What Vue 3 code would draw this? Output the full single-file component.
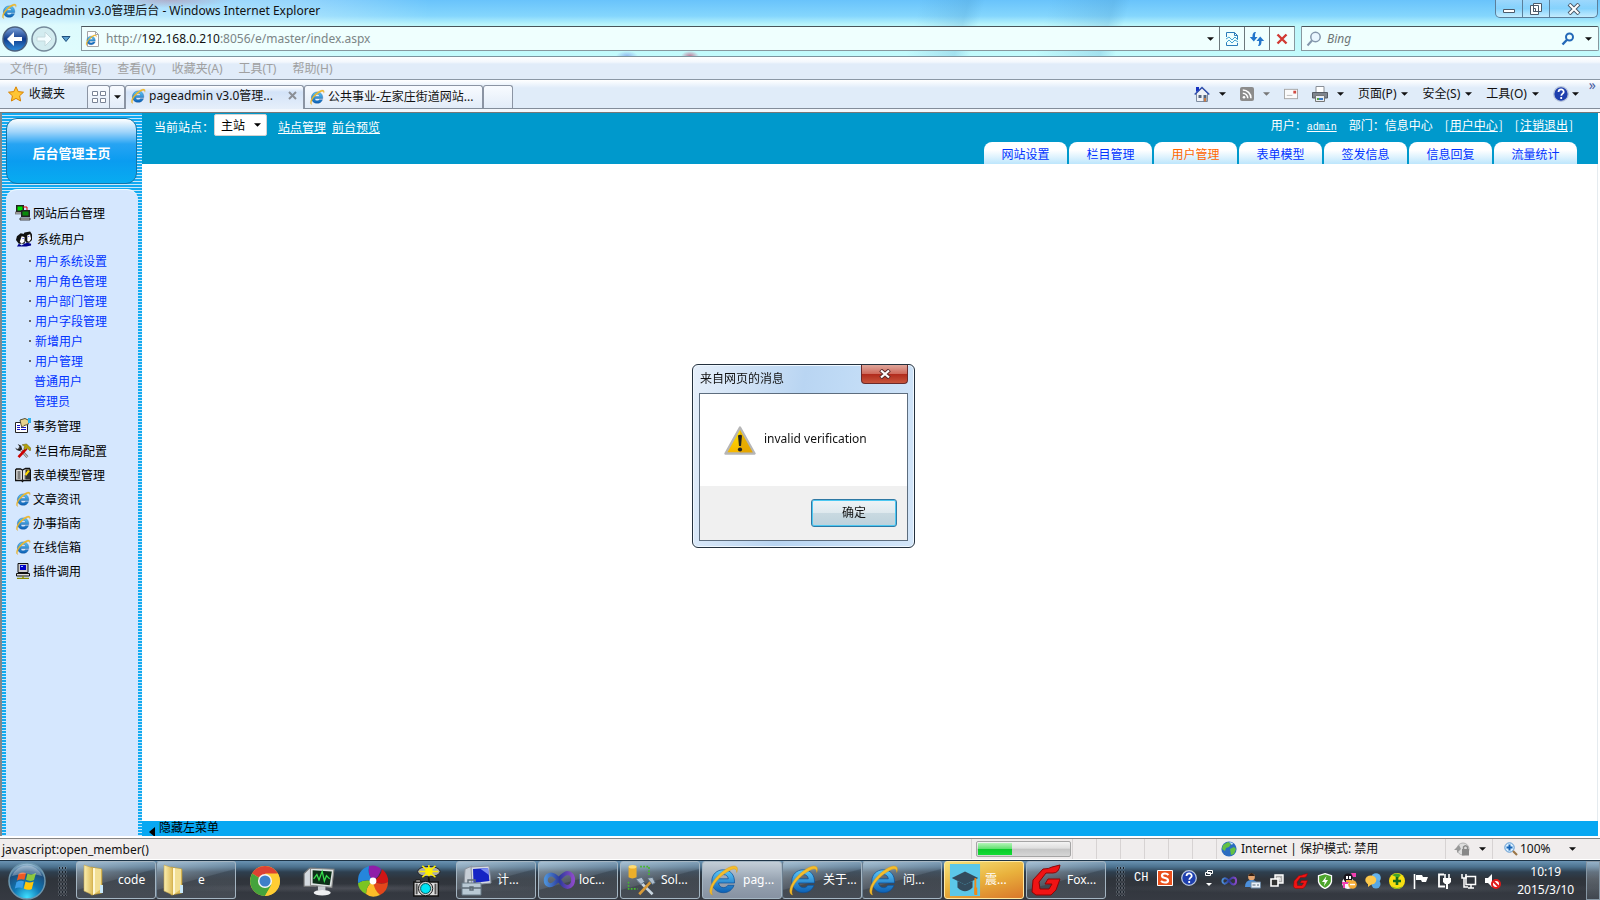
<script setup>
import { ref } from 'vue'

const site = ref('主站')
const keyword = ref('')
const address = ref('http://192.168.0.210:8056/e/master/index.aspx')
const showDialog = ref(true)

const menus = ['文件(F)', '编辑(E)', '查看(V)', '收藏夹(A)', '工具(T)', '帮助(H)']
const commands = ['页面(P)', '安全(S)', '工具(O)']

const navTabs = ['网站设置', '栏目管理', '用户管理', '表单模型', '签发信息', '信息回复', '流量统计']
const activeTab = ref('用户管理')

const sideTop = [
  { icon: 'servers', text: '网站后台管理' },
  { icon: 'users', text: '系统用户', wide: true },
]
const sideSub = ['用户系统设置', '用户角色管理', '用户部门管理', '用户字段管理', '新增用户', '用户管理']
const sidePlain = ['普通用户', '管理员']
const sideBottom = [
  { icon: 'form', text: '事务管理', tall: true },
  { icon: 'tools', text: '栏目布局配置', tall: true, wide: true },
  { icon: 'book', text: '表单模型管理' },
  { icon: 'ie', text: '文章资讯' },
  { icon: 'ie', text: '办事指南' },
  { icon: 'ie', text: '在线信箱' },
  { icon: 'computer', text: '插件调用' },
]

const launchers = ['chrome', 'monitor', 'pinwheel', 'camera']
const windows = [
  [{ icon: 'manage', text: '计...' }],
  [{ icon: 'vs', text: 'loc...' }],
  [{ icon: 'sol', text: 'Sol...' }],
  [
    { icon: 'ie', text: 'pag...', active: true },
    { icon: 'ie', text: '关于...' },
    { icon: 'ie', text: '问...' },
  ],
  [{ icon: 'cap', text: '震...', alert: true }],
  [{ icon: 'fox', text: 'Fox...' }],
]
const tray = ['vs', 'person', 'squares', 'fox', 'shield', 'penguin', 'chat', 'plus', 'flag', 'plug', 'net', 'mute']
</script>

<template>
  <div class="desktop">
    <svg class="sprite" aria-hidden="true">
      <defs>
        <linearGradient id="g-ie" x1="0" y1="0" x2="0" y2="1">
          <stop offset="0" stop-color="#5cc8f7" /><stop offset="1" stop-color="#0b5fb5" />
        </linearGradient>
        <linearGradient id="g-folder" x1="0" y1="0" x2="1" y2="0">
          <stop offset="0" stop-color="#f9eeb0" /><stop offset="1" stop-color="#dcb954" />
        </linearGradient>
        <linearGradient id="g-warn" x1="0" y1="0" x2="0" y2="1">
          <stop offset="0" stop-color="#ffe600" /><stop offset="1" stop-color="#f5b400" />
        </linearGradient>
        <linearGradient id="g-vs" x1="0" y1="0" x2="1" y2="0">
          <stop offset="0" stop-color="#4c8fd8" /><stop offset="0.5" stop-color="#2c3a9c" /><stop offset="1" stop-color="#8a4ac8" />
        </linearGradient>
        <radialGradient id="g-orb" cx="0.5" cy="0.95" r="0.95">
          <stop offset="0" stop-color="#3fe0ff" /><stop offset="0.4" stop-color="#0f77b4" /><stop offset="0.75" stop-color="#1c4d7c" /><stop offset="1" stop-color="#a9cbe0" />
        </radialGradient>
        <linearGradient id="g-back" x1="0" y1="0" x2="0" y2="1">
          <stop offset="0" stop-color="#7fa5dc" /><stop offset="0.5" stop-color="#123c8c" /><stop offset="1" stop-color="#2f8fe0" />
        </linearGradient>
      </defs>
      <symbol id="ie" viewBox="0 0 32 32">
        <path d="M27.5 19H11.6c.3 3 2.300 4.600 4.900 4.600 2 0 3.500-.8 4.400-2.300h6.100C25.300 25.900 21.500 28.700 16.300 28.700 9.700 28.700 4.800 24.100 4.800 17.300S9.800 5.800 16.300 5.800c7 0 11.600 4.800 11.200 13.200zM21.300 14.800c-.3-2.600-2.100-4.200-4.800-4.200s-4.500 1.600-4.900 4.200z" fill="url(#g-ie)" stroke="#0b4f96" stroke-width=".7" />
        <path d="M5.500 31C1.500 30 2 24 6.200 17.500 11.500 9.500 21 2.500 26.500 2c4-.2 4.800 2.600 3.200 6.500 0-3.500-2-4.200-5-3C18.500 8 10 15 6.500 21.800 4.500 26 4.500 29 5.500 31z" fill="#f4bd2b" stroke="#d0921a" stroke-width=".4" />
      </symbol>
      <symbol id="page" viewBox="0 0 16 16">
        <path d="M2.500.5h8l3 3v12h-11z" fill="#fff" stroke="#a5a5a5" /><path d="M10.500.5v3h3" fill="none" stroke="#a5a5a5" />
        <svg x="0" y="3" width="12" height="12" viewBox="0 0 32 32"><use href="#ie" /></svg>
      </symbol>
      <symbol id="star" viewBox="0 0 16 16">
        <path d="M8 .8l2.200 4.800 5.300.6-3.900 3.600 1 5.200L8 12.400 3.400 15l1-5.200L.5 6.200l5.300-.6z" fill="#ffc534" stroke="#d98200" />
      </symbol>
      <symbol id="quad" viewBox="0 0 16 16">
        <path d="M1.500 2.500h5v4h-5zM9.500 2.500h5v4h-5zM1.500 9.500h5v4h-5zM9.500 9.500h5v4h-5z" fill="#fff" stroke="#7a8496" />
      </symbol>
      <symbol id="lens" viewBox="0 0 16 16">
        <circle cx="9.500" cy="6" r="4.700" fill="#e9f7ff" stroke="#8497ac" stroke-width="1.500" /><path d="M6 9.500L1.500 14.500" stroke="#8497ac" stroke-width="2" />
      </symbol>
      <symbol id="lens-blue" viewBox="0 0 14 14">
        <circle cx="8.500" cy="5" r="3.500" fill="none" stroke="#2469b8" stroke-width="2" /><path d="M6 7.700L1.500 12.500" stroke="#2469b8" stroke-width="2.400" />
      </symbol>
      <symbol id="compat" viewBox="0 0 14 16">
        <path d="M1.500 6V1.500h8l3 3V8M9.500 1.500v3h3M1.500 12v2.500h11V12" fill="none" stroke="#2b7bb9" /><path d="M1 8l3-2 3 3 3-3 3 3M1 12l3-3 3 3 3-3 3 2" fill="none" stroke="#45a1d0" />
      </symbol>
      <symbol id="reload" viewBox="0 0 16 16">
        <path d="M7 1C4 1 3.500 3 3.500 6H.8L4.800 10.500 8.500 6H6C6 4 6 2.500 7 1zM9 15c3 0 3.500-2 3.500-5h2.700L11.200 5.500 7.500 10H10c0 2 0 3.500-1 5z" fill="#2476cb" />
      </symbol>
      <symbol id="stop" viewBox="0 0 12 12"><path d="M1.500 1.500l9 9M10.500 1.500l-9 9" stroke="#d13a34" stroke-width="2.400" /></symbol>
      <symbol id="down" viewBox="0 0 8 4"><path d="M0 0h8L4 4z" fill="currentColor" /></symbol>
      <symbol id="home" viewBox="0 0 16 16">
        <path d="M2.500 7v8.500h11V7L8 2z" fill="#eef1f6" stroke="#7e8ca0" /><path d="M.7 8.500L8 1.500l7.300 7" fill="none" stroke="#3452ae" stroke-width="1.600" /><path d="M2 1h3v3l-3 2z" fill="#1530c0" /><path d="M4.500 9h3v3h-3zM9.500 9h3v6.500h-3z" fill="#56667e" /><path d="M10 12h2v3.500h-2z" fill="#c97b45" />
      </symbol>
      <symbol id="rss" viewBox="0 0 14 14">
        <rect width="14" height="14" rx="2" fill="#8c8c8c" /><circle cx="4" cy="10.200" r="1.300" fill="#fff" /><path d="M2.800 6.200a5 5 0 015 5M2.800 3a8.200 8.200 0 018.200 8.200" fill="none" stroke="#fff" stroke-width="1.500" />
      </symbol>
      <symbol id="mail" viewBox="0 0 15 11">
        <rect x=".5" y=".5" width="14" height="10" fill="#fbfbfb" stroke="#a5a5a5" /><path d="M10 2h3v3h-3z" fill="#d04b42" /><path d="M3 7h6" stroke="#bbb" />
      </symbol>
      <symbol id="printer" viewBox="0 0 16 16">
        <path d="M4 .5h8v6H4z" fill="#fff" stroke="#8a8f97" /><path d="M.5 6.500h15V12H.5z" fill="#7f858e" stroke="#565b63" /><path d="M3.500 9.500h9v6h-9z" fill="#e9edf3" stroke="#777" /><path d="M5 12h2v2H5z" fill="#54a23d" /><path d="M7 12h4v2H7z" fill="#3b79c6" />
      </symbol>
      <symbol id="help" viewBox="0 0 16 16">
        <circle cx="8" cy="8" r="7.300" fill="#1e3fae" stroke="#b9c6dc" stroke-width="1.300" /><path d="M5.500 6c.2-3.600 5.400-3.200 5.200 0-.1 1.600-2.400 1.800-2.400 3.800M8.200 11v2" fill="none" stroke="#fff" stroke-width="1.800" />
      </symbol>
      <symbol id="servers" viewBox="0 0 16 16">
        <path d="M1 0h8v7H1z" fill="#222" /><path d="M2.500 1.500h5v4h-5z" fill="#00e000" /><path d="M0 7h8v2H0z" fill="#bbb" stroke="#333" stroke-width=".5" /><path d="M8 2h4v3" fill="none" stroke="#d00" /><path d="M6 5h9v7H6z" fill="#222" /><path d="M7.500 6.500h6v4h-6z" fill="#0a8a0a" /><path d="M5 13h10v2H5z" fill="#ccc" stroke="#222" stroke-width=".8" />
      </symbol>
      <symbol id="users" viewBox="0 0 17 16">
        <path d="M9 1l6-1 2 3v6l-3 3h-3L7 5z" fill="#111" /><path d="M12 4l3-1 1 5-2 3-2-1z" fill="#fff" /><path d="M1 5l4-3 5 1 1 4-2 6H3L0 9z" fill="#111" /><path d="M6 5l3 1v5l-3 2-2-2z" fill="#fff" /><path d="M7 7h1v1H7zM13 5h1v1h-1z" fill="#00d" /><path d="M1 16l2-3 3 2 3-2 3-1 4 1v2l-5 1z" fill="#00008b" />
      </symbol>
      <symbol id="form" viewBox="0 0 16 16">
        <path d="M.5 4.500h12v10H.5z" fill="#fff" stroke="#222" /><path d="M2 7.500h3M2 9.500h3M2 11.500h3M6 9.500h5M6 11.500h5" stroke="#11c" /><path d="M5 2l5-1.500 4 2-1 4-4 1-2 2-1-3z" fill="#e6d28c" stroke="#443c22" stroke-width=".9" /><path d="M13 0h3v5h-3z" fill="#29b4f0" />
      </symbol>
      <symbol id="tools" viewBox="0 0 18 16">
        <path d="M4 4l10 11" stroke="#777" stroke-width="3" /><path d="M4 4l10 11" stroke="#eee" /><path d="M0 4l3 2 2-1V3L3 0l4 2 1 4-3 2-3-1z" fill="#222" /><path d="M13 5L4 15" stroke="#c00" stroke-width="3" /><path d="M8 1l5-1 5 5-1 3-3-3-3 2-1-2 1-2z" fill="#b4a20c" stroke="#554d00" stroke-width=".5" />
      </symbol>
      <symbol id="book" viewBox="0 0 16 14">
        <path d="M.5 2l1-1h4l2 1 3-1.500h4l1 2v10h-7l-1 1-1-1h-6z" fill="#ddd" stroke="#111" stroke-width="1.300" /><path d="M7.500 2v11M2.500 4h3M2.500 6h3M2.500 8h3M2.500 10h3M9.500 8h3M9.500 10h3" stroke="#222" /><path d="M10.500 1.500h4.500v10h-4.500z" fill="#333" /><path d="M13 2l2 1-4 5-1-2z" fill="#ffd800" />
      </symbol>
      <symbol id="computer" viewBox="0 0 14 16">
        <path d="M2 .5h10v9H2z" fill="#ccc" stroke="#111" /><path d="M4 2h6v5H4z" fill="#0000c8" /><path d="M5 3h2v1H5z" fill="#9cf" /><path d="M.5 10.500h13v2.500H.5z" fill="#ddd" stroke="#111" /><path d="M7 13v2M1 15.500h12" stroke="#8b8b00" stroke-width="1.400" />
      </symbol>
      <symbol id="warn" viewBox="0 0 32 30">
        <path d="M16 1.500L30.500 27.500H1.500z" fill="url(#g-warn)" stroke="#b6b6b6" stroke-width="2.400" stroke-linejoin="round" /><path d="M16 4v22.500h13z" fill="#d99800" opacity=".55" /><path d="M14 9.500q2-1.500 4 0l-1 10.500h-2z" fill="#222" /><circle cx="16" cy="23.500" r="2.100" fill="#222" />
      </symbol>
      <symbol id="globe" viewBox="0 0 16 16">
        <circle cx="8" cy="8" r="7.600" fill="#2c6cc0" /><path d="M2 4l5-3 3 2-2 3-3 1-1 3-3-2zM9 8l4-2 2 2-2 5-3 1z" fill="#64c043" /><path d="M8 1l4 1-1 2z" fill="#cfe8ff" />
      </symbol>
      <symbol id="lock" viewBox="0 0 16 14">
        <circle cx="9" cy="7" r="6" fill="#ddd" stroke="#b3b3b3" /><path d="M5 3L0 8l3 0v3l4-4z" fill="#999" /><path d="M8 7h7v6.500H8z" fill="#888" /><path d="M9.500 7V5q2-2.500 4 0v2" fill="none" stroke="#888" stroke-width="1.400" />
      </symbol>
      <symbol id="zoom" viewBox="0 0 14 14">
        <circle cx="5.500" cy="5.500" r="4.700" fill="#d9efff" stroke="#5894cf" /><path d="M5.500 2.500v6M2.500 5.500h6" stroke="#1764b6" stroke-width="2" /><path d="M9 9l4 4" stroke="#9b7546" stroke-width="2.200" />
      </symbol>
      <symbol id="orb" viewBox="0 0 38 38">
        <circle cx="19" cy="19" r="18" fill="url(#g-orb)" stroke="#6c96ae" stroke-width="1.500" />
        <path d="M10.500 12q4-2.500 7.500-.8l-1.600 6.600q-3.400-1.500-7.500.6z" fill="#ee5a24" /><path d="M19.500 11.500q4 2 8.500-.5L26 18q-4 2-8-.2z" fill="#8cc63f" /><path d="M8.500 20q4-2 7.500-.6L14.400 26q-3.600-1.500-7.600.6z" fill="#3a9ee8" /><path d="M17.500 19.600q4 2 8.200 0L23.800 27q-4 2-8-.6z" fill="#ffc60a" />
        <path d="M4 14a16 16 0 0130 0q-15-5-30 0z" fill="#fff" opacity=".3" />
      </symbol>
      <symbol id="folder" viewBox="0 0 24 32">
        <path d="M9 3l11 2v24l-11 2z" fill="#dfbd5c" stroke="#b99735" stroke-width=".6" /><path d="M2 1l9 3v27l-9-4z" fill="url(#g-folder)" stroke="#c6a44a" stroke-width=".6" /><path d="M11 4l8 1v20l-8 6z" fill="#f2df95" /><path d="M11 4l2 .3v25L11 31z" fill="#fff8d5" /><path d="M18 21h3v8h-3z" fill="#c9e8f8" />
      </symbol>
      <symbol id="chrome" viewBox="-1 -1 30 30">
        <circle cx="14" cy="14" r="14" fill="#ffcd33" /><path d="M14 14L1.900 7A14 14 0 0126.100 7z" fill="#dd4132" /><path d="M1.900 7A14 14 0 0014 28l6-10.500-6-3.500z" fill="#45a33c" /><path d="M14 7h12.100A14 14 0 0114 28l6.500-11z" fill="#ffcd33" /><circle cx="14" cy="14" r="6.600" fill="#f5f5f5" /><circle cx="14" cy="14" r="5.200" fill="#3f7fc8" />
      </symbol>
      <symbol id="monitor" viewBox="0 0 30 28">
        <path d="M1 7l5-5h6v17H1z" fill="#d5dae0" stroke="#777" /><path d="M7 2l22 1-2 17-20-2z" fill="#dde2e2" stroke="#888" /><path d="M9 4l18 1-2 13-16-2z" fill="#0c2e17" /><path d="M10 12l3-4 2 5 3-8 2 9 2-5 3 3" fill="none" stroke="#38e04e" stroke-width="1.200" /><path d="M14 19h7v4h-7z" fill="#c9cdd2" /><ellipse cx="18" cy="25" rx="8" ry="2.600" fill="#eef0f2" />
      </symbol>
      <symbol id="pinwheel" viewBox="0 0 32 32">
        <path d="M16 16Q10 9 12 1q7-2 12 3-1 7-8 12z" fill="#8f1ea8" /><path d="M16 16Q24 12 25 4q7 6 6 13-6 4-15-1z" fill="#cf1515" /><path d="M16 16q8 5 15 1 0 9-8 13-6-4-7-14z" fill="#e3471b" /><path d="M16 16q1 9 7 14-8 4-14-1 0-8 7-13z" fill="#fdbd28" /><path d="M16 16q-7 5-7 13-8-4-8-11 6-4 15-2z" fill="#7bc522" /><path d="M16 16Q7 14 1 18 0 5 12 1q-2 8 4 15z" fill="#2586dc" /><circle cx="16" cy="16" r="3.400" fill="#fff" />
      </symbol>
      <symbol id="camera" viewBox="0 0 32 34">
        <ellipse cx="18" cy="7" rx="12" ry="5.500" fill="#aaa" stroke="#222" /><path d="M18 0v14M8 7h20M11 1l14 12M25 1L11 13" stroke="#ffee00" stroke-width="1.600" /><circle cx="18" cy="7" r="4" fill="#ffee00" /><path d="M18 12v7" stroke="#111" stroke-width="2" /><path d="M2 18h26v15H2z" fill="#ddd" stroke="#111" stroke-width="1.600" /><path d="M4 16h5v2H4z" fill="#fff" stroke="#111" /><path d="M5 20v11M25 20v11" stroke="#555" stroke-width="2" /><circle cx="14.500" cy="25" r="7.600" fill="#ccc" stroke="#111" /><circle cx="14.500" cy="25" r="5.300" fill="#00e4f4" stroke="#055" />
      </symbol>
      <symbol id="manage" viewBox="0 0 32 32">
        <path d="M4 5l7-3v20H3z" fill="#c7ced6" stroke="#8a929c" /><path d="M10 3l18-1 2 17-19 2z" fill="#d5dae2" stroke="#8791a0" /><path d="M12 5l15-1 1.500 13-16 2z" fill="#1524c4" /><path d="M19 4.500l8-.5 1 7z" fill="#7b8cf0" /><path d="M1 19h19v12H1z" fill="#b9c9d4" stroke="#6b7c88" /><path d="M7 19v-3h7v3M1 24h19M9 23h3v3H9z" fill="none" stroke="#5d6b75" stroke-width="1.400" />
      </symbol>
      <symbol id="vs" viewBox="0 0 32 32">
        <path d="M16 16C12 11 9 10 6.500 10.800 1.500 12.500 1.500 20 6.500 21.300 12 22.500 18 9.500 24.500 9c7.500 0 7.500 13.500 0 14-4 0-6-4-8.500-7z" fill="none" stroke="url(#g-vs)" stroke-width="4" />
      </symbol>
      <symbol id="sol" viewBox="0 0 32 36">
        <path d="M2 3v12q4 2.500 9 0V3z" fill="#edaf2a" /><ellipse cx="6.500" cy="3" rx="4.500" ry="2" fill="#ffdb72" /><path d="M15 3h10v11M2 20v8h10" fill="none" stroke="#45b92e" stroke-width="1.800" stroke-dasharray="2 1.500" /><path d="M13 18l16 16" stroke="#c9d5df" stroke-width="3" /><path d="M28 19L14 34" stroke="#d79a39" stroke-width="3" /><path d="M10 17l7-2 3 5-4 3zM23 16l6-1 3 6-3 2z" fill="#aebdcc" stroke="#53677a" />
      </symbol>
      <symbol id="cap" viewBox="0 0 32 34">
        <path d="M0 0h32v34H0z" fill="#5cc8e8" /><path d="M16 8l14 7-14 7-14-7z" fill="#334b5c" /><path d="M8 18v7q8 8 16 0v-7l-8 4z" fill="#334b5c" /><path d="M27 15v17" stroke="#f08a16" stroke-width="2" /><path d="M26 25h3v8h-3z" fill="#f08a16" />
      </symbol>
      <symbol id="fox" viewBox="0 0 32 32">
        <path d="M29 1q-1 8-7 8H15l-7 9 1 7h9l3-5h-7l3-5h12l-4 11-5 5H5l-4-3 1-12L12 5q6 0 9-2z" fill="#f01414" stroke="#8d0505" />
      </symbol>
      <symbol id="person" viewBox="0 0 16 16">
        <circle cx="6.500" cy="4" r="3.400" fill="#e5a46f" /><path d="M3 3q3.500-6 7 0z" fill="#342014" /><path d="M0 14q0-7 6.500-7t6 7z" fill="#4b8fdc" /><path d="M6 9h9.500v6H6z" fill="#e9f0f7" stroke="#6d87a1" /><path d="M7.500 12h3M12 12h2" stroke="#567" />
      </symbol>
      <symbol id="squares" viewBox="0 0 16 16">
        <path d="M6 2h8v8H6z" fill="#aaa" stroke="#fff" stroke-width="1.400" /><path d="M2 6h7v7H2z" fill="#333" stroke="#fff" stroke-width="1.600" /><path d="M8 5h3v3" fill="none" stroke="#fff" />
      </symbol>
      <symbol id="shield" viewBox="0 0 16 16">
        <path d="M8 .7l6.500 2v5.800Q13.500 13 8 15.500 2.500 13 1.500 8.500V2.700z" fill="#4da52c" stroke="#fff" stroke-width="1.300" /><path d="M9.500 3L5 9h2.700L7 13l4-6H8.300z" fill="#fff" />
      </symbol>
      <symbol id="penguin" viewBox="0 0 16 16">
        <ellipse cx="7" cy="10" rx="6" ry="6" fill="#f8f8f8" /><circle cx="7" cy="5" r="4.500" fill="#17141c" /><path d="M5 3h2v3H5zM8 3h2v3H8z" fill="#fff" /><path d="M5 7h5v2H5z" fill="#f5ac37" /><path d="M10 0h5v4h-3zM1 9h6v2H1zM2 11h2v4H2z" fill="#f040b0" /><circle cx="11.500" cy="11.500" r="4.300" fill="#f5ac37" /><path d="M9 11.500h5" stroke="#fff" stroke-width="1.400" />
      </symbol>
      <symbol id="chat" viewBox="0 0 16 16">
        <circle cx="11" cy="5" r="4.800" fill="#65b4ec" /><circle cx="11" cy="11" r="4.500" fill="#58a7e4" /><ellipse cx="5.800" cy="7" rx="5.500" ry="4.500" fill="#fdc84b" /><path d="M3 10v4l4-3z" fill="#fdc84b" />
      </symbol>
      <symbol id="plus" viewBox="0 0 16 16">
        <circle cx="8" cy="8" r="8" fill="#f8df12" /><path d="M2 13A8 8 0 0014 13Q8 17 2 13zM3 2q5-3 9 0L9 5z" fill="#43a52a" /><path d="M8 4v8M4 8h8" stroke="#186b1c" stroke-width="2.600" />
      </symbol>
      <symbol id="flag" viewBox="0 0 16 16"><path d="M1.500 1v15" stroke="#fff" stroke-width="1.600" /><path d="M3 2h6l1 2h5l-2 5H9L8 7H3z" fill="#fff" /></symbol>
      <symbol id="plug" viewBox="0 0 16 16">
        <path d="M7 1.500H2v12h6" fill="none" stroke="#fff" stroke-width="1.800" /><path d="M8 1v4M12 1v4" stroke="#fff" stroke-width="1.600" /><path d="M6 5h8v4l-2 2H8L6 9zM9 10h2v6H9z" fill="#fff" />
      </symbol>
      <symbol id="net" viewBox="0 0 16 16">
        <path d="M5 3.500h9.500v8H5z" fill="none" stroke="#fff" stroke-width="1.500" /><path d="M1 1v4h4V1M3 5v9h4M7 15h6M10 12v3" fill="none" stroke="#fff" stroke-width="1.500" />
      </symbol>
      <symbol id="mute" viewBox="0 0 16 16">
        <path d="M0 5h3l4-4v13l-4-4H0z" fill="#fff" /><circle cx="11" cy="11" r="4" fill="#fff" stroke="#e01a1a" stroke-width="2" /><path d="M8.500 8.500l5 5" stroke="#e01a1a" stroke-width="2" />
      </symbol>
    </svg>

    <header class="glass">
      <div class="title-bar">
        <svg class="i16"><use href="#ie" /></svg>
        <h1>pageadmin v3.0管理后台 - Windows Internet Explorer</h1>
        <div class="win-buttons">
          <button aria-label="最小化"><svg viewBox="0 0 14 12"><path d="M1.500 6.500h11v3h-11z" fill="#fff" stroke="#4c5a6a" /></svg></button>
          <button aria-label="还原"><svg viewBox="0 0 14 12"><path d="M4.500.5h8v8h-8zM1.500 2.500h8v9h-8z" fill="#fff" stroke="#4c5a6a" /><path d="M4.500 5.500h2v3h-2z" fill="none" stroke="#4c5a6a" /></svg></button>
          <button class="wide" aria-label="关闭"><svg viewBox="0 0 14 12"><path d="M2 1l10 10M12 1L2 11" stroke="#4c5a6a" stroke-width="4" /><path d="M2.500 1.500l9 9M11.500 1.500l-9 9" stroke="#fff" stroke-width="2" /></svg></button>
        </div>
      </div>
      <div class="address-row">
        <button class="round" aria-label="后退">
          <svg viewBox="0 0 26 26"><circle cx="13" cy="13" r="12" fill="url(#g-back)" stroke="#4a5f7e" stroke-width="1.500" /><path d="M12 6l-7 7 7 7v-5h8v-4h-8z" fill="#fff" /></svg>
        </button>
        <button class="round" aria-label="前进">
          <svg viewBox="0 0 26 26"><circle cx="13" cy="13" r="12" fill="#d3ecf0" stroke="#75899a" stroke-width="1.500" /><path d="M14 6l7 7-7 7v-5H6v-4h8z" fill="#f3fdff" stroke="#c5dade" /></svg>
        </button>
        <button class="history" aria-label="最近浏览"><svg viewBox="0 0 10 6"><path d="M1 .5h8L5 5.500z" fill="#5aa0d0" stroke="#1f4f7f" /></svg></button>
        <div class="address">
          <svg class="i16"><use href="#page" /></svg>
          <label class="url">
            <span aria-hidden="true"><i>http://</i>192.168.0.210<i>:8056/e/master/index.aspx</i></span>
            <input v-model="address" aria-label="地址">
          </label>
          <button class="plain" aria-label="地址列表"><svg class="arrow"><use href="#down" /></svg></button>
          <button aria-label="兼容性视图"><svg class="i16"><use href="#compat" /></svg></button>
          <button aria-label="刷新"><svg class="i16"><use href="#reload" /></svg></button>
          <button aria-label="停止"><svg class="i12"><use href="#stop" /></svg></button>
        </div>
        <div class="search">
          <svg class="i16"><use href="#lens" /></svg>
          <input v-model="keyword" placeholder="Bing" aria-label="搜索">
          <button aria-label="搜索"><svg class="i14"><use href="#lens-blue" /></svg></button>
          <button aria-label="搜索选项"><svg class="arrow"><use href="#down" /></svg></button>
        </div>
      </div>
    </header>

    <nav class="menu-bar">
      <button v-for="m in menus" :key="m">{{ m }}</button>
    </nav>

    <div class="tab-bar">
      <button class="favorites"><svg class="i16"><use href="#star" /></svg>收藏夹</button>
      <button class="quick" aria-label="快速导航选项卡"><svg class="i16"><use href="#quad" /></svg></button>
      <button class="quick narrow" aria-label="选项卡列表"><svg class="arrow"><use href="#down" /></svg></button>
      <button class="tab current">
        <svg class="i16"><use href="#ie" /></svg><span>pageadmin v3.0管理...</span>
        <svg class="close" viewBox="0 0 9 9"><path d="M1 1l7 7M8 1L1 8" stroke="#8b8f96" stroke-width="2" /></svg>
      </button>
      <button class="tab"><svg class="i16"><use href="#ie" /></svg><span>公共事业-左家庄街道网站...</span></button>
      <button class="tab blank" aria-label="新选项卡"></button>
      <div class="commands">
        <button aria-label="主页"><svg class="i16"><use href="#home" /></svg><svg class="arrow"><use href="#down" /></svg></button>
        <button class="dim" aria-label="源"><svg class="i14"><use href="#rss" /></svg><svg class="arrow"><use href="#down" /></svg></button>
        <button aria-label="阅读邮件"><svg class="i14"><use href="#mail" /></svg></button>
        <button aria-label="打印"><svg class="i16"><use href="#printer" /></svg><svg class="arrow"><use href="#down" /></svg></button>
        <button v-for="c in commands" :key="c" class="word">{{ c }}<svg class="arrow"><use href="#down" /></svg></button>
        <button class="help" aria-label="帮助"><svg class="i16"><use href="#help" /></svg><svg class="arrow"><use href="#down" /></svg></button>
        <span class="more">»</span>
      </div>
    </div>

    <div class="page">
      <aside>
        <a href="#" class="home-link">后台管理主页</a>
        <div class="panel">
          <ul>
            <li v-for="s in sideTop" :key="s.text" class="top">
              <a href="#" :class="{ wide: s.wide }"><svg class="i16"><use :href="'#' + s.icon" /></svg>{{ s.text }}</a>
            </li>
            <li v-for="s in sideSub" :key="s" class="sub dot"><a href="#">{{ s }}</a></li>
            <li v-for="s in sidePlain" :key="s" class="sub"><a href="#">{{ s }}</a></li>
            <li v-for="s in sideBottom" :key="s.text" class="item">
              <a href="#" :class="{ tall: s.tall, wide: s.wide }"><svg class="i16"><use :href="'#' + s.icon" /></svg>{{ s.text }}</a>
            </li>
          </ul>
        </div>
      </aside>

      <section class="content">
        <div class="site-head">
          <div class="site">
            <label for="site">当前站点：</label>
            <div class="select">
              <select id="site" v-model="site"><option>主站</option></select>
              <svg class="arrow"><use href="#down" /></svg>
            </div>
            <a href="#">站点管理</a>
            <a href="#">前台预览</a>
          </div>
          <div class="account">
            <div class="who">
              <span>用户：<a href="#" class="mono">admin</a></span>
              <span>部门：信息中心</span>
              <span class="bracket">[<a href="#">用户中心</a>]</span>
              <span class="bracket">[<a href="#">注销退出</a>]</span>
            </div>
            <nav>
              <button v-for="t in navTabs" :key="t" :class="{ on: t === activeTab }" @click="activeTab = t">{{ t }}</button>
            </nav>
          </div>
        </div>
        <main></main>
        <button class="hide-menu"><svg viewBox="0 0 6 10"><path d="M6 0v10L0 5z" /></svg><span>隐藏左菜单</span></button>
      </section>
    </div>

    <footer class="status">
      <span class="message">javascript:open_member()</span>
      <div class="cell progress"><div class="track"><div class="bar"></div></div></div>
      <div v-for="n in 6" :key="n" class="cell"></div>
      <div class="cell zone"><svg class="i16"><use href="#globe" /></svg>Internet | 保护模式: 禁用</div>
      <div class="cell lock"><svg class="i16"><use href="#lock" /></svg><svg class="arrow"><use href="#down" /></svg></div>
      <div class="cell zoom"><svg class="i14"><use href="#zoom" /></svg><span>100%</span><svg class="arrow"><use href="#down" /></svg></div>
    </footer>

    <div class="taskbar">
      <button class="start" aria-label="开始"><svg><use href="#orb" /></svg></button>
      <div class="grip"></div>
      <div class="group folders">
        <button class="task"><svg class="i32"><use href="#folder" /></svg><span>code</span></button>
        <button class="task"><svg class="i32"><use href="#folder" /></svg><span>e</span></button>
      </div>
      <div class="launchers">
        <button v-for="l in launchers" :key="l" :aria-label="l"><svg class="i32"><use :href="'#' + l" /></svg></button>
      </div>
      <div v-for="(g, i) in windows" :key="i" class="group">
        <button v-for="t in g" :key="t.text" class="task" :class="{ active: t.active, alert: t.alert }">
          <svg class="i32"><use :href="'#' + t.icon" /></svg><span>{{ t.text }}</span>
        </button>
      </div>
      <div class="grip right"></div>
      <div class="lang">
        <span>CH</span>
        <svg class="i16" viewBox="0 0 16 16"><path d="M.5.500h15v15H.5z" fill="#e9501c" stroke="#fff" /><path d="M11.500 5Q10 3.500 8 3.500c-4 0-4 4 0 4.500s4 4.500 0 4.500q-2.500 0-4-1.500" fill="none" stroke="#fff" stroke-width="2.200" /></svg>
        <svg class="i16"><use href="#help" /></svg>
        <svg class="restore" viewBox="0 0 8 16"><path d="M2.500.5h5v3h-5zM.5 2.500h5v3h-5z" fill="#26303a" stroke="#fff" /><path d="M1 13h6l-3 3z" fill="#fff" /></svg>
      </div>
      <div class="tray">
        <svg v-for="(t, i) in tray" :key="i" class="i16"><use :href="'#' + t" /></svg>
      </div>
      <div class="clock"><span>10:19</span><span>2015/3/10</span></div>
      <button class="show-desktop" aria-label="显示桌面"></button>
    </div>

    <div v-if="showDialog" class="overlay">
      <div class="dialog" role="alertdialog" aria-labelledby="dialog-title">
        <div class="dialog-title">
          <span id="dialog-title">来自网页的消息</span>
          <button aria-label="关闭" @click="showDialog = false">
            <svg viewBox="0 0 12 10"><path d="M1.500 1l9 8M10.500 1l-9 8" stroke="#5a2b2b" stroke-width="4" /><path d="M2 1.500l8 7M10 1.500l-8 7" stroke="#fff" stroke-width="2.200" /></svg>
          </button>
        </div>
        <div class="dialog-body">
          <div class="dialog-text"><svg><use href="#warn" /></svg><span>invalid verification</span></div>
          <div class="dialog-foot"><button @click="showDialog = false">确定</button></div>
        </div>
      </div>
    </div>
  </div>
</template>

<style>
body {
  margin: 0;
  background: #fff;
}
</style>

<style scoped>
* {
  box-sizing: border-box;
}
.desktop {
  display: flex;
  flex-direction: column;
  min-height: 100vh;
  font: 12px/16px "Noto Sans", "Noto Sans CJK SC", sans-serif;
  color: #111;
}
.sprite {
  position: absolute;
  width: 0;
  height: 0;
}
button, input, select {
  font: inherit;
  color: inherit;
  border: 0;
  padding: 0;
  margin: 0;
  background: none;
}
button {
  display: flex;
  align-items: center;
  white-space: nowrap;
}
svg {
  flex: none;
  display: block;
}
.i12 { width: 12px; height: 12px; }
.i14 { width: 14px; height: 14px; }
.i16 { width: 16px; height: 16px; }
.i32 { width: 32px; height: 32px; }
.arrow { width: 7px; height: 4px; }

/* browser chrome */
.glass {
  height: 57px;
  background:
    radial-gradient(ellipse 9px 5px at 690px 56px, rgba(190, 70, 110, .7), transparent),
    radial-gradient(ellipse 11px 5px at 627px 56px, rgba(110, 140, 230, .6), transparent),
    radial-gradient(ellipse 60px 8px at 170px 0, rgba(190, 90, 110, .35), transparent),
    linear-gradient(90deg, rgba(255, 255, 255, .55), rgba(255, 255, 255, .3) 18%, transparent 27%),
    linear-gradient(105deg, transparent 57%, rgba(70, 150, 200, .25) 60%, transparent 61%, transparent 65%, rgba(70, 150, 200, .25) 69%, transparent 70%),
    linear-gradient(#69c3fb, #84d6fd 16px, #bcf6fb 25px, #c3fbfc);
  border-bottom: 1px solid #7d949f;
}
.title-bar {
  display: flex;
  align-items: center;
  height: 26px;
  padding-left: 1px;
  gap: 4px;
}
.title-bar .i16 {
  margin-bottom: 4px;
}
h1 {
  flex: 1;
  margin: 0 0 5px;
  font: inherit;
}
.win-buttons {
  display: flex;
  align-self: flex-start;
  height: 18px;
  margin-right: 2px;
  border: 1px solid #5b7f9b;
  border-top: 0;
  border-radius: 0 0 5px 5px;
  background: linear-gradient(rgba(255, 255, 255, .35), rgba(255, 255, 255, .1) 50%, rgba(255, 255, 255, .5));
}
.win-buttons button {
  width: 27px;
  justify-content: center;
  border-right: 1px solid #5b7f9b;
}
.win-buttons .wide {
  width: 47px;
  border: 0;
}
.win-buttons svg {
  width: 14px;
  height: 12px;
}
.address-row {
  display: flex;
  align-items: center;
  height: 25px;
  padding: 0 1px 0 2px;
}
.round {
  margin-right: 3px;
}
.round svg {
  width: 26px;
  height: 26px;
}
.history {
  width: 21px;
  padding-left: 1px;
}
.history svg {
  width: 10px;
  height: 6px;
}
.address, .search {
  display: flex;
  align-items: center;
  height: 25px;
  background: #effffe;
  border: 1px solid #87989f;
  border-top-color: #49545a;
}
.address {
  flex: 1;
  padding-left: 3px;
  margin-right: 6px;
}
.url {
  position: relative;
  flex: 1;
  margin-left: 5px;
}
.url i {
  font-style: normal;
  color: #7c8586;
}
.url input {
  position: absolute;
  inset: 0;
  width: 100%;
  color: transparent;
}
.address button {
  width: 25px;
  height: 23px;
  justify-content: center;
  border-left: 1px solid #6c787c;
}
.address .plain {
  width: 18px;
  border: 0;
}
.search {
  width: 298px;
  padding: 0 6px 0 4px;
  border-radius: 0 2px 2px 0;
}
.search input {
  flex: 1;
  min-width: 0;
  margin-left: 5px;
  font-style: italic;
}
.search input::placeholder {
  color: #6d7677;
}
.search button {
  margin-left: 10px;
}
.menu-bar {
  display: flex;
  align-items: center;
  gap: 16px;
  height: 23px;
  padding: 1px 10px 0;
  color: #a0a0a0;
  background: linear-gradient(#fff, #f3f7fd 5px, #e1ecf9 7px, #e1ecf9);
  border-bottom: 1px solid #8b97a5;
}
.tab-bar {
  display: flex;
  height: 33px;
  padding: 5px 4px 0 8px;
  background: linear-gradient(#fff, #e8f1fb 6px, #e0ecf9 8px, #e0ecf9 28px, #838d9a 28px, #838d9a 29px, #f3f7fc 29px);
  border-bottom: 1px solid #777;
}
.favorites {
  gap: 5px;
  height: 18px;
  width: 79px;
}
.quick, .tab {
  height: 23px;
  border: 1px solid #8b94a3;
  border-bottom: 0;
  border-radius: 3px 3px 0 0;
  background: linear-gradient(#f8fbff, #e2ecf8);
}
.quick {
  width: 23px;
  justify-content: center;
}
.quick.narrow {
  width: 16px;
  margin-left: -1px;
}
.tab {
  width: 179px;
  padding: 0 4px;
  gap: 3px;
}
.tab.current {
  height: 24px;
  padding: 0 6px 4px 4px;
  background: linear-gradient(#fff, #d3e3f8 6px, #e6effa);
}
.tab span {
  flex: 1;
  text-align: left;
  overflow: hidden;
}
.tab .close {
  width: 9px;
  height: 9px;
}
.tab.blank {
  width: 30px;
}
.commands {
  display: flex;
  align-items: center;
  height: 17px;
  margin-left: auto;
}
.commands button {
  gap: 9px;
  margin-right: 14px;
}
.commands .dim .arrow {
  color: #777;
}
.commands .word {
  gap: 5px;
}
.commands .help {
  gap: 3px;
  margin-right: 10px;
}
.more {
  align-self: flex-start;
  margin-top: -8px;
  font-size: 14px;
  color: #4c5da0;
}

/* admin page */
.page {
  flex: 1;
  display: flex;
  margin-right: 2px;
  font-family: "Noto Sans CJK SC", sans-serif;
}
.page a {
  color: inherit;
}
aside {
  display: flex;
  flex-direction: column;
  width: 142px;
  padding: 5px 4px 0;
  border-left: 2px solid #83888c;
  background: repeating-linear-gradient(#12aaf1 0 2px, #c9e8fb 2px 3px);
}
aside a {
  text-decoration: none;
}
.home-link {
  display: flex;
  align-items: center;
  justify-content: center;
  height: 66px;
  padding-top: 4px;
  margin: 0 1px 5px 0;
  border: 1px solid #1675a9;
  border-radius: 11px;
  background: linear-gradient(#fff, #9fd4fa 13px, #27a4f3 25px, #0a9cf0 42px, #08acf1);
  font-size: 13px;
  font-weight: bold;
}
.page .home-link {
  color: #fff;
}
.panel {
  flex: 1;
  padding-top: 10px;
  border-radius: 11px 11px 0 0;
  border-top: 1px solid #f2faff;
  background: #d5e7fe;
}
ul {
  margin: 0;
  padding: 0;
  list-style: none;
  color: #000;
}
.top a, .item a {
  display: flex;
  align-items: center;
  gap: 2px;
  height: 26px;
  padding-left: 9px;
}
.top .wide {
  gap: 5px;
  height: 25px;
  padding-left: 10px;
}
.item a {
  height: 24px;
}
.item .tall {
  height: 25px;
}
.item .wide {
  gap: 4px;
}
.sub {
  height: 20px;
  padding-left: 28px;
  line-height: 20px;
  color: #0033ff;
}
.sub.dot::before {
  content: "";
  float: left;
  width: 2px;
  height: 2px;
  margin: 9px 0 0 -6px;
  background: #666;
}
.sub.dot {
  padding-left: 29px;
}
.sub + .item {
  padding-top: 2px;
}
.content {
  flex: 1;
  display: flex;
  flex-direction: column;
}
.site-head {
  display: flex;
  justify-content: space-between;
  height: 51px;
  color: #fff;
  background: #0099cc;
}
.site {
  display: flex;
  align-items: center;
  gap: 6px;
  height: 28px;
  padding-left: 12px;
}
.site label {
  margin-right: -6px;
}
.select {
  position: relative;
  margin: -4px 5px 0 0;
}
.select select {
  appearance: none;
  display: block;
  width: 53px;
  height: 22px;
  padding-left: 6px;
  background: #fff;
  border: 1px solid #d2d2d2;
  border-radius: 2px;
  color: #000;
}
.select .arrow {
  position: absolute;
  right: 6px;
  top: 9px;
  color: #000;
  pointer-events: none;
}
.account {
  display: flex;
  flex-direction: column;
  justify-content: space-between;
  align-items: flex-end;
  padding: 4px 21px 0 0;
}
.who {
  display: flex;
  gap: 12px;
  padding-right: 4px;
}
.bracket a {
  margin: 0 1px;
}
.mono {
  font-family: "Liberation Mono", monospace;
  font-size: 10px;
}
.account nav {
  display: flex;
  gap: 2px;
}
.account nav button {
  width: 83px;
  height: 22px;
  padding-top: 2px;
  justify-content: center;
  border-radius: 8px 8px 0 0;
  background: linear-gradient(#fff 8px, #bde6fc);
  color: #0033ff;
}
.account nav .on {
  color: #ff6600;
}
main {
  flex: 1;
  border-right: 1px solid #e5ebef;
}
.hide-menu {
  height: 15px;
  padding-left: 7px;
  gap: 4px;
  line-height: 15px;
  background: #08a8f2;
  color: #000;
}
.hide-menu svg {
  width: 6px;
  height: 10px;
  margin-top: 6px;
}
.hide-menu span {
  margin-bottom: 4px;
}

/* status bar */
.status {
  display: flex;
  height: 24px;
  padding-top: 2px;
  background: linear-gradient(#fff 2px, #858585 2px, #858585 3px, #f0eded 3px);
  border-bottom: 1px solid #fff;
}
.message {
  flex: 1;
  padding: 4px 2px 0;
}
.cell {
  display: flex;
  align-items: center;
  width: 24px;
  margin-top: 1px;
  border-left: 1px solid #d7d3d3;
}
.progress {
  width: 101px;
  padding-left: 4px;
}
.track {
  width: 95px;
  height: 16px;
  padding: 1px;
  border: 1px solid #a5a5a5;
  border-radius: 2px;
  background: linear-gradient(#f3f3f3, #dedede 45%, #c4c4c4 50%, #d6d6d6);
}
.bar {
  width: 37%;
  height: 100%;
  background: linear-gradient(#b4f5b8, #62e070 48%, #0ac82a 50%, #12dc34);
}
.zone {
  width: 229px;
  padding-left: 4px;
  gap: 4px;
}
.lock {
  width: 47px;
  padding-left: 8px;
  gap: 9px;
}
.zoom {
  width: 108px;
  padding-left: 11px;
  gap: 2px;
}
.zoom span {
  flex: 1;
}
.zoom .arrow {
  margin-right: 24px;
}

/* windows taskbar */
.taskbar {
  display: flex;
  height: 40px;
  color: #fff;
  border-top: 1px solid #1e3548;
  background:
    radial-gradient(ellipse at 22% 70%, rgba(120, 120, 130, .35), transparent 12%),
    radial-gradient(ellipse at 85% 70%, rgba(110, 115, 125, .35), transparent 14%),
    linear-gradient(#6a93b3, #4b718e 6px, #2e3f4f 11px, #2f343b 18px, #363a42);
}
.start {
  margin: 0 12px 0 8px;
}
.start svg {
  width: 38px;
  height: 38px;
}
.grip {
  width: 9px;
  height: 30px;
  margin: 5px 9px 0 0;
  background: radial-gradient(circle, #1a222b 1px, rgba(200, 210, 220, .25) 1px, transparent 2px) 0 0 / 3px 4px;
}
.grip.right {
  margin: 5px 9px 0 8px;
}
.group {
  display: flex;
  margin-right: 2px;
}
.task {
  width: 80px;
  height: 38px;
  padding-left: 4px;
  gap: 4px;
  border: 1px solid #a4b5c2;
  border-radius: 3px;
  background: linear-gradient(165deg, rgba(220, 235, 245, .55), rgba(150, 165, 180, .35) 48%, rgba(100, 110, 120, .35) 50%, rgba(120, 130, 140, .25));
}
.task span {
  flex: 1;
  text-align: left;
}
.folders {
  margin-right: 13px;
}
.folders .i32 {
  margin: 0 -1px 0 -3px;
}
.folders span {
  padding-left: 5px;
}
.task + .task {
  border-left-color: #6c7f90;
}
.task.active {
  background: linear-gradient(#c3ced8, #98a4b2 50%, #8792a2);
}
.task.alert {
  border-color: #ffe9a3;
  background: linear-gradient(165deg, #f6e27a, #e9b13c 50%, #d9772a);
}
.launchers {
  display: flex;
  gap: 22px;
  margin-right: 13px;
}
.lang {
  display: flex;
  gap: 8px;
  padding-top: 9px;
  margin-right: 8px;
}
.lang span {
  margin-right: 1px;
  font-family: "Liberation Mono", monospace;
  line-height: 17px;
}
.lang .restore {
  width: 8px;
  height: 16px;
}
.tray {
  display: flex;
  gap: 8px;
  padding-top: 12px;
}
.clock {
  flex: 1;
  display: flex;
  flex-direction: column;
  align-items: center;
  padding: 2px 0 0 4px;
  line-height: 18px;
}
.show-desktop {
  width: 14px;
  border: 1px solid #8797a4;
  background: linear-gradient(rgba(220, 230, 240, .4), rgba(90, 100, 110, .3));
}

/* message box */
.overlay {
  position: fixed;
  inset: 0;
  display: grid;
  place-items: center;
  padding: 11px 0 0 7px;
}
.dialog {
  width: 223px;
  padding: 0 6px 6px;
  border: 1px solid #24313e;
  border-radius: 6px;
  background: linear-gradient(100deg, #e6effa, #b9d5f2 45%, #bfdaf5 60%, #d4e6f9);
  box-shadow: inset 0 0 0 1px #f0f8ff;
}
.dialog-title {
  display: flex;
  justify-content: space-between;
  height: 28px;
  padding-left: 1px;
  line-height: 28px;
}
.dialog-title button {
  width: 47px;
  height: 19px;
  justify-content: center;
  border: 1px solid #6a2b2b;
  border-top: 0;
  border-radius: 0 0 4px 4px;
  background: linear-gradient(#e0a79c, #cf6a5c 48%, #b02a1c 50%, #c8553c);
}
.dialog-title svg {
  width: 12px;
  height: 10px;
}
.dialog-body {
  border: 1px solid #5d6d7e;
  background: #fff;
}
.dialog-text {
  display: flex;
  align-items: center;
  gap: 8px;
  height: 92px;
  padding-left: 24px;
}
.dialog-text svg {
  width: 32px;
  height: 30px;
  margin-top: 2px;
}
.dialog-text span {
  margin-bottom: 2px;
}
.dialog-foot {
  display: flex;
  justify-content: flex-end;
  padding: 13px 10px;
  background: #f0f0f0;
}
.dialog-foot button {
  width: 86px;
  height: 28px;
  justify-content: center;
  border: 1px solid #2f79a4;
  border-radius: 3px;
  box-shadow: inset 0 0 0 1px #4cc8f2;
  background: linear-gradient(#eef3f6, #dfe9ee 48%, #c9d9e1 50%, #bdd2dc);
}
</style>
